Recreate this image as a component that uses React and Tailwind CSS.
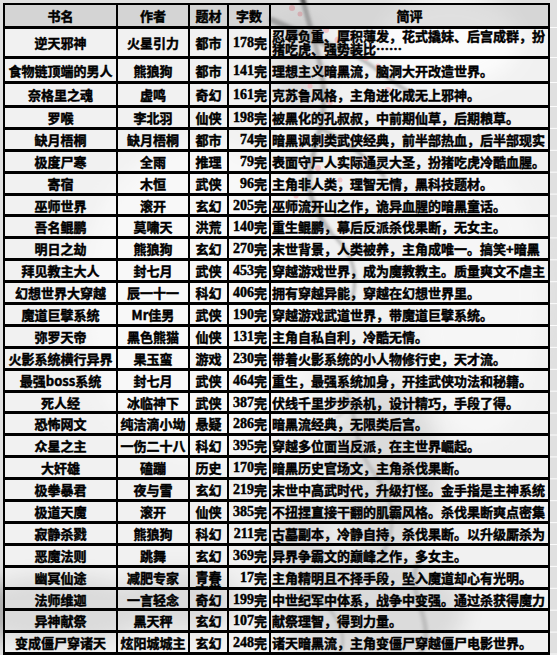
import React from 'react';

const rows = [
  ['逆天邪神', '火星引力', '都市', '178', ['忍辱负重、厚积薄发，花式撬妹、后宫成群，扮', '猪吃虎、强势装比……']],
  ['食物链顶端的男人', '熊狼狗', '都市', '141', '理想主义暗黑流，脑洞大开改造世界。'],
  ['奈格里之魂', '虚鸣', '奇幻', '161', '克苏鲁风格，主角进化成无上邪神。'],
  ['罗喉', '李北羽', '仙侠', '198', '被黑化的孔叔叔，中前期仙草，后期粮草。'],
  ['缺月梧桐', '缺月梧桐', '都市', '74', '暗黑讽刺类武侠经典，前半部热血，后半部现实'],
  ['极度尸寒', '全雨', '推理', '79', '表面守尸人实际通灵大圣，扮猪吃虎冷酷血腥。'],
  ['寄宿', '木恒', '武侠', '96', '主角非人类，理智无情，黑科技题材。'],
  ['巫师世界', '滚开', '玄幻', '205', '巫师流开山之作，诡异血腥的暗黑童话。'],
  ['吾名鲲鹏', '莫啸天', '洪荒', '140', '重生鲲鹏，幕后反派杀伐果断，无女主。'],
  ['明日之劫', '熊狼狗', '玄幻', '270', '末世背景，人类被养，主角成唯一。搞笑+暗黑'],
  ['拜见教主大人', '封七月', '武侠', '453', '穿越游戏世界，成为魔教教主。质量爽文不虐主'],
  ['幻想世界大穿越', '辰一十一', '科幻', '406', '拥有穿越异能，穿越在幻想世界里。'],
  ['魔道巨擘系统', 'Mr佳男', '武侠', '190', '穿越游戏武道世界，带魔道巨擘系统。'],
  ['弥罗天帝', '黑色熊猫', '仙侠', '131', '主角自私自利，冷酷无情。'],
  ['火影系统横行异界', '果玉蛮', '游戏', '230', '带着火影系统的小人物修行史，天才流。'],
  ['最强boss系统', '封七月', '武侠', '464', '重生，最强系统加身，开挂武侠功法和秘籍。'],
  ['死人经', '冰临神下', '武侠', '387', '伏线千里步步杀机，设计精巧，手段了得。'],
  ['恐怖网文', '纯洁滴小坳', '悬疑', '286', '暗黑流经典，无限类后宫。'],
  ['众星之主', '一伤二十八', '科幻', '395', '穿越多位面当反派，在主世界崛起。'],
  ['大奸雄', '磕蹦', '历史', '170', '暗黑历史官场文，主角杀伐果断。'],
  ['极拳暴君', '夜与雪', '玄幻', '219', '末世中高武时代，升级打怪。金手指是主神系统'],
  ['极道天魔', '滚开', '仙侠', '385', '不扭捏直接干翻的肌霸风格。杀伐果断爽点密集'],
  ['寂静杀戮', '熊狼狗', '科幻', '211', ['古墓副本，冷静自持，杀伐果断。以升级厮杀为', '主。']],
  ['恶魔法则', '跳舞', '玄幻', '369', '异界争霸文的巅峰之作，多女主。'],
  ['幽冥仙途', '减肥专家', '青春文学', '17', '主角精明且不择手段，坠入魔道却心有光明。'],
  ['法师维迦', '一言轻念', '奇幻', '199', '中世纪军中体系，战争中变强。通过杀获得魔力'],
  ['异神献祭', '黑天秤', '玄幻', '107', '献祭理智，得到力量。'],
  ['变成僵尸穿诸天', '炫阳城城主', '玄幻', '248', '诸天暗黑流，主角变僵尸穿越僵尸电影世界。'],
];

const rowH = (i) =>
  i === 0 ? 'h-[30px]' : i === 1 ? 'h-[25px]' : i === 2 ? 'h-[24px]' : 'h-[21.9px]';

const cellBase = 'shrink-0 border-r-2 border-black overflow-hidden whitespace-nowrap';
const bodyBg = 'bg-white/55';

function Painting() {
  const blossoms = [
    [292, 8, 3], [300, 14, 2.5], [326, 30, 3], [338, 40, 3.5], [352, 36, 2.5], [366, 58, 3],
    [378, 66, 2.5], [344, 70, 3], [310, 86, 2.5], [330, 102, 3], [356, 96, 2.5], [388, 90, 3],
    [300, 150, 2.5], [318, 168, 3], [340, 180, 2.5], [362, 160, 3], [296, 196, 2.5], [410, 120, 2.5],
  ];
  const lines = [29, 59, 84, 108];
  for (let k = 1; k <= 25; k++) lines.push(108 + k * 21.9);
  return (
    <svg className="absolute inset-0" width="557" height="655" viewBox="0 0 557 655">
      <defs>
        <filter id="bl1" x="-20%" y="-20%" width="140%" height="140%">
          <feGaussianBlur stdDeviation="1.4" />
        </filter>
        <filter id="bl8" x="-50%" y="-50%" width="200%" height="200%">
          <feGaussianBlur stdDeviation="10" />
        </filter>
      </defs>
      <rect width="557" height="655" fill="#e0e0e0" />
      <ellipse cx="450" cy="40" rx="70" ry="45" fill="#ffffff" opacity="0.8" filter="url(#bl8)" />
      <ellipse cx="200" cy="300" rx="120" ry="160" fill="#ffffff" opacity="0.5" filter="url(#bl8)" />
      <ellipse cx="480" cy="300" rx="60" ry="140" fill="#ffffff" opacity="0.4" filter="url(#bl8)" />
      <g filter="url(#bl8)" fill="#737373" opacity="0.45">
        <ellipse cx="385" cy="470" rx="55" ry="85" />
        <ellipse cx="370" cy="610" rx="95" ry="55" />
        <ellipse cx="300" cy="540" rx="30" ry="40" />
        <ellipse cx="60" cy="610" rx="90" ry="35" />
        <ellipse cx="180" cy="600" rx="60" ry="30" />
        <ellipse cx="300" cy="70" rx="26" ry="44" />
      </g>
      <g filter="url(#bl1)" stroke="#262626" fill="none" strokeLinecap="round" opacity="0.75">
        <path d="M272 20 C 295 30, 320 44, 348 52" strokeWidth="6" />
        <path d="M302 -4 C 312 40, 332 80, 320 128 S 300 190, 330 232" strokeWidth="5" />
        <path d="M348 52 C 372 62, 396 88, 424 100" strokeWidth="3.5" />
        <path d="M320 128 C 342 140, 362 152, 384 176" strokeWidth="3.5" />
        <path d="M330 232 C 350 250, 360 270, 352 300" strokeWidth="3" />
      </g>
      <g filter="url(#bl1)" stroke="#4d4d4d" fill="none" strokeLinecap="round" opacity="0.65">
        <path d="M340 380 C 360 410, 350 440, 372 470 S 400 520, 380 560" strokeWidth="4" />
        <path d="M420 560 C 400 590, 440 620, 420 655" strokeWidth="5" />
        <path d="M300 590 C 330 600, 350 630, 340 655" strokeWidth="3" />
        <path d="M330 410 l 12 -14 M 336 418 l 14 -10" strokeWidth="2" />
      </g>
      <g fill="#de5e6b" opacity="0.75">
        {blossoms.map(([x, y, r], i) => (
          <circle key={i} cx={x} cy={y} r={r} />
        ))}
      </g>
      <g stroke="#ffffff" strokeWidth="1" opacity="0.9">
        {lines.map((y, i) => (
          <line key={i} x1="550" x2="557" y1={y - 1.5} y2={y - 1.5} />
        ))}
      </g>
    </svg>
  );
}

export default function App() {
  const font = "font-['Noto_Sans_CJK_SC','Noto_Sans_CJK_JP',sans-serif]";
  return (
    <div
      className={`relative w-[557px] h-[655px] overflow-hidden ${font} text-[13px] leading-[13px] font-bold text-black [-webkit-text-stroke:0.45px_#000]`}
    >
      <Painting />
      <div className="relative ml-[3px] mt-[3px] w-[547px] border-l-2 border-t-2 border-black">
        {/* header */}
        <div className="flex h-[24px] border-b-[3px] border-black">
          <div className={`${cellBase} w-[113px] bg-[#cfcfcf]/70 flex items-center justify-center`}>书名</div>
          <div className={`${cellBase} w-[72px] bg-[#cfcfcf]/70 flex items-center justify-center`}>作者</div>
          <div className={`${cellBase} w-[39px] bg-[#cfcfcf]/70 flex items-center justify-center`}>题材</div>
          <div className={`${cellBase} w-[42px] bg-[#cfcfcf]/70 flex items-center justify-center`}>字数</div>
          <div className={`${cellBase} w-[279px] bg-[#cfcfcf]/60 flex items-center justify-center`}>简评</div>
        </div>
        {rows.map(([name, author, genre, count, desc], i) => {
          const multiDesc = Array.isArray(desc);
          const firstRow = i === 0;
          const wrapGenre = genre.length > 2;
          return (
            <div key={i} className={`flex ${rowH(i)} border-b-[3px] border-black`}>
              <div className={`${cellBase} w-[113px] ${bodyBg} flex items-center justify-center`}>{name}</div>
              <div className={`${cellBase} w-[72px] ${bodyBg} flex items-center justify-center`}>{author}</div>
              {wrapGenre ? (
                <div className={`shrink-0 border-r-2 border-black overflow-hidden w-[39px] ${bodyBg} pt-[2px] text-center`}>
                  {genre.slice(0, 2)}
                  <br />
                  {genre.slice(2)}
                </div>
              ) : (
                <div className={`${cellBase} w-[39px] ${bodyBg} flex items-center justify-center`}>{genre}</div>
              )}
              <div className={`${cellBase} w-[42px] ${bodyBg} flex items-center justify-end pr-[2px]`}>
                <span className="font-['Liberation_Serif','Noto_Sans_CJK_SC',serif] text-[14px]">{count}</span>
                <span>完</span>
              </div>
              {multiDesc ? (
                <div
                  className={`${cellBase} w-[279px] ${bodyBg} pl-[1px] ${firstRow ? 'pt-0 leading-[13px]' : 'pt-[3px]'}`}
                >
                  {desc[0]}
                  <br />
                  {desc[1]}
                </div>
              ) : (
                <div className={`${cellBase} w-[279px] ${bodyBg} flex items-center pl-[1px]`}>{desc}</div>
              )}
            </div>
          );
        })}
      </div>
    </div>
  );
}
